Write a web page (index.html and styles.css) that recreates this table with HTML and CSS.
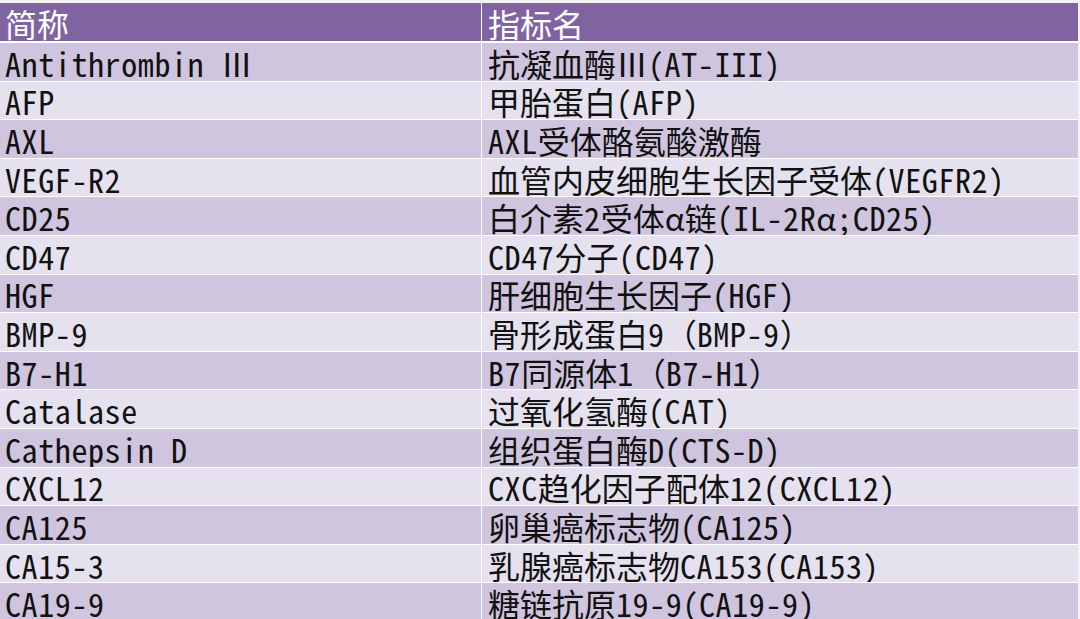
FILE: index.html
```html
<!DOCTYPE html>
<html lang="zh">
<head>
<meta charset="utf-8">
<link rel="stylesheet" href="styles.css">
</head>
<body>
<div class="table">
  <div class="cell head">简称</div><div class="cell head">指标名</div>
  <div class="cell odd abbr">Antithrombin Ⅲ</div><div class="cell odd">抗凝血酶Ⅲ<span class="l">(AT-III)</span></div>
  <div class="cell even abbr">AFP</div><div class="cell even">甲胎蛋白<span class="l">(AFP)</span></div>
  <div class="cell odd abbr">AXL</div><div class="cell odd"><span class="l">AXL</span>受体酪氨酸激酶</div>
  <div class="cell even abbr">VEGF-R2</div><div class="cell even">血管内皮细胞生长因子受体<span class="l">(VEGFR2)</span></div>
  <div class="cell odd abbr">CD25</div><div class="cell odd">白介素<span class="l">2</span>受体α链<span class="l">(IL-2R</span>α<span class="l">;CD25)</span></div>
  <div class="cell even abbr">CD47</div><div class="cell even"><span class="l">CD47</span>分子<span class="l">(CD47)</span></div>
  <div class="cell odd abbr">HGF</div><div class="cell odd">肝细胞生长因子<span class="l">(HGF)</span></div>
  <div class="cell even abbr">BMP-9</div><div class="cell even">骨形成蛋白<span class="l">9</span>（<span class="l">BMP-9</span>）</div>
  <div class="cell odd abbr">B7-H1</div><div class="cell odd"><span class="l">B7</span>同源体<span class="l">1</span>（<span class="l">B7-H1</span>）</div>
  <div class="cell even abbr">Catalase</div><div class="cell even">过氧化氢酶<span class="l">(CAT)</span></div>
  <div class="cell odd abbr">Cathepsin D</div><div class="cell odd">组织蛋白酶<span class="l">D(CTS-D)</span></div>
  <div class="cell even abbr">CXCL12</div><div class="cell even"><span class="l">CXC</span>趋化因子配体<span class="l">12(CXCL12)</span></div>
  <div class="cell odd abbr">CA125</div><div class="cell odd">卵巢癌标志物<span class="l">(CA125)</span></div>
  <div class="cell even abbr">CA15-3</div><div class="cell even">乳腺癌标志物<span class="l">CA153(CA153)</span></div>
  <div class="cell odd abbr">CA19-9</div><div class="cell odd">糖链抗原<span class="l">19-9(CA19-9)</span></div>
</div>
</body>
</html>
```
FILE: styles.css
```css
html, body {
  margin: 0;
  padding: 0;
  background: #f4f2f7;
  overflow: hidden;
}
.table {
  display: grid;
  grid-template-columns: 481px 596px;
  grid-auto-rows: 37.6px;
  grid-template-rows: 39px;
  column-gap: 1px;
  row-gap: 1px;
  margin-top: 3px;
  background: #ffffff;
  width: 1078px;
  font-family: "Noto Sans Mono CJK SC", "Noto Sans CJK SC", monospace;
  font-size: 32px;
  color: #111111;
}
.cell {
  display: flex;
  align-items: center;
  padding-left: 5px;
  padding-top: 2px;
  box-sizing: border-box;
  line-height: 34px;
  white-space: nowrap;
  overflow: hidden;
}
.cell:nth-child(even) {
  padding-left: 6px;
}
.abbr,
.l {
  letter-spacing: 0.6px;
}
.head {
  background: #8064a2;
  color: #ffffff;
  margin-bottom: 1px;
}
.odd {
  background: #cfc5de;
}
.even {
  background: #e5e1ee;
}
```
